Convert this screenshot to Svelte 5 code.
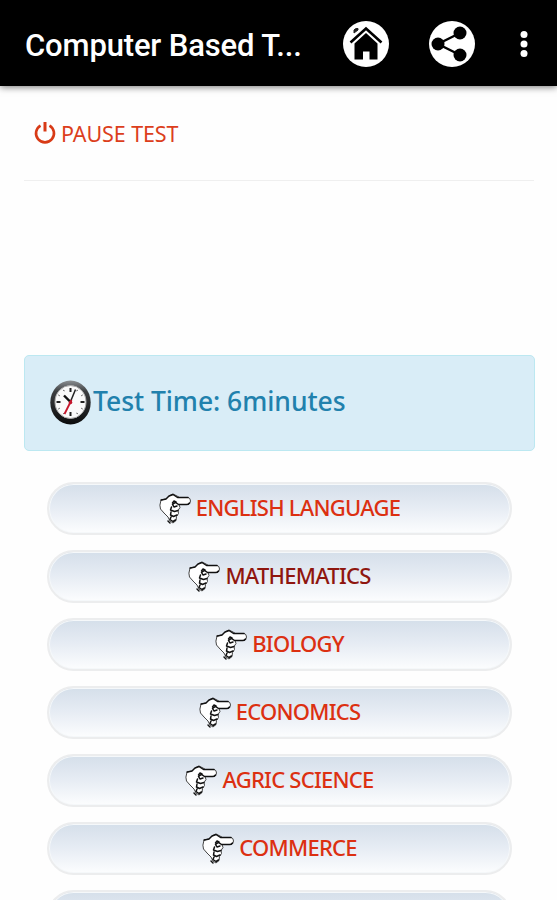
<script lang="ts">
  type Subject = { name: string; visited?: boolean };

  const subjects: Subject[] = [
    { name: 'ENGLISH LANGUAGE' },
    { name: 'MATHEMATICS', visited: true },
    { name: 'BIOLOGY' },
    { name: 'ECONOMICS' },
    { name: 'AGRIC SCIENCE' },
    { name: 'COMMERCE' },
    { name: '' }
  ];

  const ticks = [0, 30, 60, 90, 120, 150, 180, 210, 240, 270, 300, 330];
</script>

<div class="screen">
  <header class="app-bar">
    <h1 class="title">Computer Based T...</h1>
    <button class="icon-button home" aria-label="Home">
      <svg width="46" height="46" viewBox="0 0 46 46">
        <circle cx="23" cy="23" r="23" fill="#fff" />
        <path d="M11 12V9q1-2 4-1.500V9z" fill="#222" stroke="#222" />
        <path d="M7.500 21.500 23 7.500l15.500 14" fill="none" stroke="#000" stroke-width="2.600" />
        <path d="M11.500 22.500 23 12l11.500 10.500V38.500H26.500V30.500h-6.500v8h-8.500z" fill="#000" />
      </svg>
    </button>
    <button class="icon-button share" aria-label="Share">
      <svg width="46" height="46" viewBox="0 0 46 46">
        <circle cx="23" cy="23" r="23" fill="#fff" />
        <path d="M31 12 9 23l22 11" fill="none" stroke="#000" stroke-width="2.400" />
        <circle cx="31" cy="12" r="6.500" />
        <circle cx="9" cy="23" r="6.500" />
        <circle cx="31" cy="34" r="6.500" />
      </svg>
    </button>
    <button class="icon-button more" aria-label="More options">
      <svg width="8" height="28" viewBox="0 0 8 28" fill="#fff">
        <circle cx="4" cy="4.500" r="3.500" />
        <circle cx="4" cy="14" r="3.500" />
        <circle cx="4" cy="23.500" r="3.500" />
      </svg>
    </button>
  </header>

  <main>
    <div class="pause">
      <svg width="22" height="22" viewBox="0 0 22 22" fill="none" stroke="#d83a16">
        <path d="M6.500 3.600a9 9 0 1 0 9 0" stroke-width="2.600" />
        <path d="M11 0v9.500" stroke-width="3" />
      </svg>
      <span>PAUSE TEST</span>
    </div>

    <div class="alert">
      <svg class="clock" width="41" height="45" viewBox="0 0 41 45">
        <defs>
          <linearGradient id="rim" x1="0" y1="0" x2="0" y2="1">
            <stop offset="0" stop-color="#8b8f92" />
            <stop offset=".25" stop-color="#3c3e40" />
            <stop offset="1" stop-color="#0b0b0c" />
          </linearGradient>
        </defs>
        <ellipse cx="20.500" cy="22.500" rx="20.200" ry="22" fill="url(#rim)" />
        <ellipse cx="20.500" cy="22" rx="15.500" ry="16.500" fill="#fafafa" stroke="#aaa" />
        {#each ticks as angle}
          <path
            d={angle % 90 === 0 ? 'M20.500 8v4' : 'M20.500 8v1.500'}
            transform="rotate({angle} 20.5 22)"
            stroke="#222"
            stroke-width={angle % 90 === 0 ? 2 : 0.8}
          />
        {/each}
        <path d="M20.500 22 14 15.500" stroke="#111" stroke-width="2.400" />
        <path d="M19.500 24 25.500 9.500" stroke="#222" stroke-width="1.500" />
        <path d="M21.500 20 14.500 34" stroke="#c5152b" stroke-width="1.800" />
        <circle cx="20.500" cy="22.500" r="1.800" fill="#c5152b" />
      </svg>
      <span>Test Time: 6minutes</span>
    </div>

    <div class="subjects">
      {#each subjects as subject}
        <button class="subject" class:visited={subject.visited}>
          {#if subject.name}
            <svg width="32" height="32" viewBox="0 0 32 32" fill="#fff" stroke="#111" stroke-linejoin="round" stroke-linecap="round">
              <path d="M2 7 7 6 10 3 14 1l4 2 2.500 1.500H29q2.500.500 2.500 3.500t-3 3.500H20l1 3-2 3 .500 3-2 3-.500 4-3 2.500-3-2-2-4-4-4-3.500-4Q0 13 2 7z" stroke="#444" stroke-width="1" />
              <path d="M2.500 7 7 6 10 3 14 1.500 18.500 4.500H29M30.500 10q-1 1.500-3 1.500h-8l-3-2.200-3 2 1.500 2.700 3-1" fill="none" stroke-width="1.500" />
              <path d="m12.500 14-1 3 4 1.500 3.500-1M12 19l-.500 3 3 1.500 3.500-1.500M12 24l-1 2.500 3 2 2.500-1.500M13.500 10l1.500-2 2 1M9 28l2 2" fill="none" stroke-width="1.500" />
            </svg>
            <span>{subject.name}</span>
          {/if}
        </button>
      {/each}
    </div>
  </main>
</div>

<style>
  :global(body) {
    background: #fefefe;
    overflow: hidden;
  }
  .screen {
    height: 900px;
    overflow: hidden;
    background: #fefefe;
    font-family: 'Noto Sans', 'Open Sans', sans-serif;
  }
  .app-bar {
    box-sizing: border-box;
    display: flex;
    align-items: center;
    height: 86px;
    padding: 2px 29px 0 25px;
    background: #000;
    box-shadow: 0 1px 7px rgba(0, 0, 0, 0.55);
  }
  .title {
    flex: 1;
    margin: 0;
    padding-top: 3px;
    color: #fff;
    font-family: Roboto, sans-serif;
    font-size: 31px;
    font-weight: 500;
    letter-spacing: -0.150px;
    white-space: nowrap;
  }
  .icon-button {
    display: flex;
    padding: 0;
    border: 0;
    background: none;
  }
  .share {
    margin: 0 45px 0 40px;
  }
  .more {
    margin-right: 0;
  }
  main {
    padding: 0 22px 0 24px;
  }
  .pause {
    box-sizing: border-box;
    display: flex;
    align-items: center;
    gap: 5px;
    height: 95px;
    margin: 0 1px 174px 0;
    padding-left: 10px;
    border-bottom: 1px solid #efefef;
    color: #dc3e1c;
    font-size: 21.500px;
    letter-spacing: -0.1px;
  }
  .alert {
    box-sizing: border-box;
    display: flex;
    align-items: center;
    gap: 2px;
    height: 96px;
    padding: 0 0 2px 25px;
    border: 1px solid #bce8f1;
    border-radius: 5px;
    background: #d9edf7;
    color: #2181ad;
    font-size: 26.500px;
    font-weight: 500;
  }
  .alert span {
    margin-top: -2px;
    letter-spacing: -0.050px;
  }
  .subjects {
    display: flex;
    flex-direction: column;
    gap: 15px;
    padding: 31px 23px 0;
  }
  .subject {
    box-sizing: border-box;
    display: flex;
    flex-shrink: 0;
    align-items: center;
    justify-content: center;
    gap: 5px;
    height: 53px;
    padding: 0;
    border: 2px solid #ecedee;
    border-radius: 27px;
    background: linear-gradient(#d5dfea, #e5ebf3 45%, #fcfdfe);
    box-shadow: inset 0 0 0 1px #f5f8fa;
    color: #dc3011;
    font-family: inherit;
    font-size: 22px;
    font-weight: 500;
    letter-spacing: -0.750px;
  }
  .subject span {
    margin-top: -4px;
  }
  .visited {
    color: #8f160e;
  }
</style>
